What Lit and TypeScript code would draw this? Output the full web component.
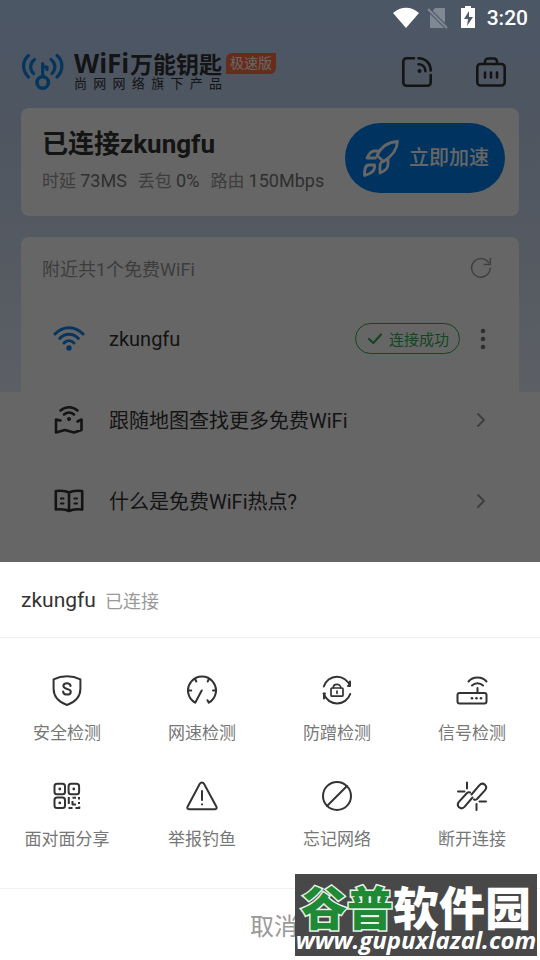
import { LitElement, html, css, svg, SVGTemplateResult } from "lit";
import { customElement, property } from "lit/decorators.js";

type Glyph = { box: string; art: SVGTemplateResult };

const glyphs: Record<string, Glyph> = {
  logo: {
    box: "0 0 44 40",
    art: svg`<g stroke-width="3.2"><path d="M7.500 3.500C1 9 1 19 7.500 25M36 3.500c6.500 5.500 6.500 15.500 0 21.500"/><path d="M13.500 7.500c-5 4-5 9.500-1 14M30 7.500c5 4 5 9.500 1 14"/><circle cx="21.700" cy="30.500" r="5.700" stroke-width="3.600"/><path d="M21.700 24V11.500M21.700 15h4.300v2.500"/></g>`,
  },
  cast: {
    box: "0 0 32 32",
    art: svg`<g stroke-width="2.600"><path d="M13 2.300H5.500a3.200 3.200 0 0 0-3.200 3.200v21a3.200 3.200 0 0 0 3.200 3.200h21a3.200 3.200 0 0 0 3.200-3.200V19"/><path d="M17.500 2.300c7 0 12.200 5.200 12.200 12.200M17.500 8.300c4 0 6.800 2.800 6.800 6.800"/></g><circle cx="18.500" cy="15" r="2" fill="currentColor" stroke="none"/>`,
  },
  toolbox: {
    box: "0 0 32 32",
    art: svg`<g stroke-width="2.600"><rect x="2.300" y="8" width="27.400" height="21.500" rx="3.200"/><path d="M10 7.500V5.500A3 3 0 0 1 13 2.500h6a3 3 0 0 1 3 3v2M10 16.500v5M16 16.500v5M22 16.500v5"/></g>`,
  },
  rocket: {
    box: "0 0 38 38",
    art: svg`<g stroke-width="2.800"><path d="M35.500 2.500C26 3 19 8 15 16.500l6.500 6C29.500 17.500 35 12 35.500 2.500zM17.500 12H12c-3 0-5 3-7 7h8.500M26 19.500v6c0 4-3 6.500-8 8.500v-8.500l2-3"/><path d="M2.500 36.500c0-6 .5-10.500 4.500-10.500h5.500c1 5-2 8.500-10 10.500z"/></g>`,
  },
  refresh: {
    box: "0 0 22 22",
    art: svg`<g stroke-width="1.400"><path d="M20.200 11.500a9.300 9.300 0 1 1-1.700-6M20.300 1.500v6h-6"/></g>`,
  },
  wifi: {
    box: "0 0 32 28",
    art: svg`<g stroke-width="3"><path d="M2 9C10 .5 22 .5 30 9M6.700 13.500c5-5.600 13.600-5.600 18.600 0M11 18c3-3 7-3 10 0"/></g><circle cx="16" cy="23" r="2.700" fill="currentColor" stroke="none"/>`,
  },
  map: {
    box: "0 0 32 32",
    art: svg`<g stroke-width="2.600"><path d="M7.500 6.500c5-4.300 12-4.300 17 0M11 10.500c3-2.500 7-2.500 10 0"/><path d="M7.500 16.500l-4.500-1V28.500l9-2.500 9 2.500 7.500-2.500V15.500l-4 2"/></g><circle cx="16" cy="15" r="2" fill="currentColor" stroke="none"/>`,
  },
  book: {
    box: "0 0 32 28",
    art: svg`<g stroke-width="2.600"><path d="M16 5.500C12.500 3.500 7.500 3.500 2.800 4v18.500c4.700-.5 9.700-.5 13.200 1.500 3.500-2 8.500-2 13.200-1.500V4c-4.700-.5-9.700-.5-13.200 1.500zM16 5.500V24"/></g><path stroke-width="2.200" d="M8 11.500h2.500M8 16.500h2.500M21.500 11.500h2.500M21.500 16.500h2.500"/>`,
  },
  chevron: { box: "0 0 10 16", art: svg`<path stroke-width="1.800" d="M2 2l6 6-6 6"/>` },
  check: { box: "0 0 16 16", art: svg`<path stroke-width="2.200" d="M2 8l4.300 4L14 3.500"/>` },
  more: {
    box: "0 0 6 22",
    art: svg`<g fill="currentColor" stroke="none"><circle cx="3" cy="3" r="2.300"/><circle cx="3" cy="11" r="2.300"/><circle cx="3" cy="19" r="2.300"/></g>`,
  },
  shield: {
    box: "0 0 32 32",
    art: svg`<path d="M16 2.300c-5 0-9 .9-13.400 3.100v9.300C2.600 22.500 8 28 16 31c8-3 13.400-8.500 13.400-16.300V5.400C25 3.200 21 2.300 16 2.300z"/><path d="M19.600 12c-.3-1.800-1.800-2.700-3.600-2.700-2.100 0-3.600 1-3.600 2.700 0 3.900 7.400 2 7.400 5.700 0 1.800-1.600 2.900-3.800 2.900s-3.700-1.100-3.900-3"/>`,
  },
  gauge: {
    box: "0 0 32 32",
    art: svg`<path d="M15.700 16.500L9.200 28.700A14 14 0 1 1 22.800 28.700l-1.300-2.500M2 16.500h3.200M27 16.500h3.200M9 4.800l1.300 2.700M23 4.800l-1.300 2.700"/>`,
  },
  guard: {
    box: "0 0 32 32",
    art: svg`<path d="M2.800 12.500A13.800 13.800 0 0 1 29 12v-4.500M29 12h-2M29.200 20A13.800 13.800 0 0 1 3 20v4.500M2.500 19.500h1.500"/><g stroke-width="1.700"><rect x="10" y="14" width="12" height="8.200" rx="1"/><path d="M12.200 14c0-4.800 7.600-4.800 7.600 0M16 17v2.300"/></g>`,
  },
  router: {
    box: "0 0 32 32",
    art: svg`<rect x="1.500" y="19" width="29" height="10.500" rx="2"/><path d="M21.500 19v-5M12.500 7.500c4.500-5.500 13.500-5.500 18 0M16 11.500c3-3 8-3 11 0"/><g fill="currentColor" stroke="none"><circle cx="16" cy="24.300" r="1.300"/><circle cx="20.500" cy="24.300" r="1.300"/><circle cx="25" cy="24.300" r="1.300"/></g>`,
  },
  qr: {
    box: "0 0 32 32",
    art: svg`<rect x="3.500" y="3.800" width="10.500" height="10.500" rx="2.500"/><rect x="17.600" y="3.800" width="10.500" height="10.500" rx="2.500"/><rect x="3.500" y="17.600" width="10.500" height="10.500" rx="2.500"/><g fill="currentColor" stroke="none"><circle cx="8.800" cy="9" r="1.400"/><circle cx="22.800" cy="9" r="1.400"/><circle cx="8.800" cy="22.900" r="1.400"/></g><path stroke-linecap="butt" d="M17.800 17v7M17.500 28h4M21.500 17.800h3.500M28 17v2.500M21.500 21v3.500h3.500M28 22v2M24.500 28h4.500M28.300 26.500v2"/>`,
  },
  warning: {
    box: "0 0 32 32",
    art: svg`<path d="M13.800 3.800c1-1.800 3.200-1.800 4.200 0l12.300 22.700c.8 1.500 0 2.800-1.600 2.800H3.300c-1.600 0-2.400-1.300-1.600-2.800zM16 11v9M16 24.300v.2"/>`,
  },
  ban: { box: "0 0 32 32", art: svg`<circle cx="16" cy="16" r="14"/><path d="M6 26L26 6"/>` },
  unlink: {
    box: "0 0 32 32",
    art: svg`<path d="M15.500 14.500l7.800-9.200c1.700-1.900 4-2 5.600-.6 1.600 1.500 1.600 3.800 0 5.600L21 19c-1 1-2 1-3 .5M16.500 17.500l-7.800 9.200c-1.700 1.900-4 2-5.600.6-1.600-1.500-1.600-3.800 0-5.600L11 13c1-1 2-1 3-.5M11 2.500v6M2 11.500h6.500M20.500 30v-6M30 21.500h-6.500"/>`,
  },
};

@customElement("ui-icon")
export class UiIcon extends LitElement {
  @property() name = "";

  static styles = css`
    :host {
      display: block;
      flex: none;
    }
    .art {
      display: block;
      width: 100%;
      height: 100%;
      fill: none;
      stroke: currentColor;
      stroke-width: 2;
      stroke-linecap: round;
      stroke-linejoin: round;
    }
  `;

  render() {
    const g = glyphs[this.name];
    return html`<svg class="art" viewBox=${g.box} aria-hidden="true">${g.art}</svg>`;
  }
}

const actions = [
  ["shield", "安全检测"],
  ["gauge", "网速检测"],
  ["guard", "防蹭检测"],
  ["router", "信号检测"],
  ["qr", "面对面分享"],
  ["warning", "举报钓鱼"],
  ["ban", "忘记网络"],
  ["unlink", "断开连接"],
];

@customElement("app-root")
export class AppRoot extends LitElement {
  static styles = css`
    :host {
      display: flex;
      flex-direction: column;
      position: relative;
      min-height: 100vh;
      font-family: Roboto, "Noto Sans CJK SC", sans-serif;
      color: #333;
      background: #fff;
    }
    button {
      font: inherit;
      color: inherit;
      background: none;
      border: 0;
      padding: 0;
    }
    a {
      color: inherit;
      text-decoration: none;
    }
    h1, h2, p {
      margin: 0;
      padding: 0;
      font-weight: 400;
    }
    .behind {
      flex: 1;
      position: relative;
      box-sizing: border-box;
      padding: 0 21px 21px;
      background: linear-gradient(#bedaff, #c4d6f2 108px, #d2e0f4 237px, #e6effc 392px, #fff 392px);
    }
    .scrim {
      position: absolute;
      inset: 0;
      background: rgba(0, 0, 0, 0.6);
    }
    .status {
      position: relative;
      z-index: 1;
      display: flex;
      align-items: center;
      justify-content: flex-end;
      height: 36px;
      margin-right: -9px;
      color: #fff;
    }
    .status-icons {
      width: 84px;
      height: 24px;
      margin-right: 10px;
    }
    .clock {
      font-size: 21px;
      font-weight: 500;
      line-height: 36px;
    }
    .header {
      display: flex;
      align-items: center;
      height: 72px;
    }
    .logo {
      width: 44px;
      height: 40px;
      color: #0a84e8;
      margin-right: 9px;
    }
    .brand {
      width: 148px;
    }
    .brand-name {
      display: flex;
      align-items: center;
      justify-content: space-between;
      font: 700 23px/24px "Noto Sans CJK SC", sans-serif;
      white-space: nowrap;
    }
    .brand-latin {
      font: 700 26px/24px "Open Sans", sans-serif;
    }
    .brand-sub {
      font-size: 13px;
      line-height: 18px;
      text-align: justify;
      text-align-last: justify;
    }
    .edition {
      align-self: flex-start;
      margin: 17px 0 0 4px;
      padding: 0 4px;
      border-radius: 6px 0 6px 0;
      background: #ff6e46;
      color: #fff;
      font-size: 14px;
      line-height: 21px;
    }
    .tools {
      display: flex;
      gap: 42px;
      margin: 0 12px 0 auto;
    }
    .tool {
      width: 32px;
      height: 32px;
    }
    .card {
      background: #fff;
      border-radius: 8px;
    }
    .connected {
      display: flex;
      justify-content: space-between;
      height: 108px;
      box-sizing: border-box;
      padding: 15px 14px 0 21px;
      margin-bottom: 21px;
    }
    .title {
      font-size: 26px;
      font-weight: 700;
      line-height: 42px;
    }
    .metrics {
      display: flex;
      gap: 11px;
      padding-top: 2px;
      font-size: 17px;
      line-height: 28px;
      color: #777;
      white-space: nowrap;
    }
    .value {
      font-size: 18px;
    }
    .label {
      color: #999;
    }
    .boost {
      display: flex;
      align-items: center;
      gap: 9px;
      height: 70px;
      padding: 0 16px 0 17px;
      border-radius: 35px;
      background: #0080f0;
      color: #fff;
      font-size: 20px;
      font-weight: 500;
      line-height: 24px;
      white-space: nowrap;
    }
    .rocket {
      width: 38px;
      height: 38px;
    }
    .nearby-head {
      display: flex;
      align-items: center;
      justify-content: space-between;
      height: 61px;
      padding: 0 27px 0 21px;
      color: #999;
    }
    .nearby-title {
      font-size: 18px;
    }
    .refresh {
      width: 22px;
      height: 22px;
    }
    .row {
      display: flex;
      align-items: center;
      height: 81px;
      padding: 0 33px 0 32px;
      font-size: 20px;
    }
    .row-icon {
      width: 32px;
      height: 32px;
      margin-right: 24px;
    }
    .accent {
      color: #1684e8;
    }
    .row-text {
      flex: 1;
    }
    .chevron {
      width: 10px;
      height: 16px;
      color: #999;
    }
    .ok {
      display: flex;
      align-items: center;
      gap: 6px;
      height: 31px;
      box-sizing: border-box;
      padding: 0 10px 0 11px;
      border: 1px solid #2fae55;
      border-radius: 16px;
      color: #2fae55;
      font-size: 15px;
    }
    .check {
      width: 16px;
      height: 16px;
    }
    .more {
      width: 6px;
      height: 22px;
      margin-left: 20px;
      color: #777;
    }
    .sheet {
      background: #fff;
    }
    .sheet-head {
      display: flex;
      align-items: center;
      gap: 9px;
      height: 75px;
      padding: 0 21px;
    }
    .sheet-name {
      font-size: 21px;
    }
    .sheet-state {
      font-size: 18px;
      color: #999;
    }
    .actions {
      display: grid;
      grid-template-columns: repeat(4, 1fr);
      row-gap: 35px;
      padding: 36px 0 37px;
      border: solid #f0f0f0;
      border-width: 1px 0;
    }
    .action {
      display: flex;
      flex-direction: column;
      align-items: center;
      gap: 15px;
      padding-right: 1px;
      font-size: 17px;
      line-height: 24px;
    }
    .action-icon {
      width: 32px;
      height: 32px;
    }
    .action-label {
      color: #777;
    }
    .cancel {
      display: block;
      width: 100%;
      height: 71px;
      padding-left: 8px;
      font-size: 24px;
      color: #999;
    }
    .mark {
      position: absolute;
      right: 3px;
      bottom: 4px;
      width: 242px;
      height: 82px;
      background: #484848;
      color: #fff;
      text-align: center;
      white-space: nowrap;
    }
    .mark-name {
      font: 900 46px/54px "Noto Sans CJK SC", sans-serif;
      padding-top: 4px;
      height: 50px;
    }
    .mark-green {
      color: #1f8a35;
      -webkit-text-stroke: 3px #e8f3e8;
      paint-order: stroke fill;
    }
    .mark-url {
      font: italic 700 24px/24px "Open Sans", sans-serif;
    }
  `;

  render() {
    return html`
      <main class="behind">
        <div class="status">
          <svg class="status-icons" viewBox="0 0 84 24" aria-hidden="true">
            <path fill="#fff" d="M0 7C8 0 18 0 26 7L13 22z" />
            <path fill="#7f8893" d="M42 2h10v20H37V8z" />
            <path stroke="#4e5a69" stroke-width="4" d="M36 4l18 18" />
            <path stroke="#7f8893" stroke-width="2" d="M35 3l19 19" />
            <path fill="#fff" d="M72 0h6v2h4v20H68V2h4z" />
            <path fill="#4e5a69" d="M76 5l-5 8h4l-1 7 6-9h-4z" />
          </svg>
          <time class="clock">3:20</time>
        </div>
        <header class="header">
          <ui-icon class="logo" name="logo"></ui-icon>
          <div class="brand">
            <h1 class="brand-name"><span class="brand-latin">WiFi</span>万能钥匙</h1>
            <p class="brand-sub">尚网网络旗下产品</p>
          </div>
          <span class="edition">极速版</span>
          <div class="tools">
            <button aria-label="分享"><ui-icon class="tool" name="cast"></ui-icon></button>
            <button aria-label="工具箱"><ui-icon class="tool" name="toolbox"></ui-icon></button>
          </div>
        </header>
        <section class="card connected">
          <div>
            <h2 class="title">已连接zkungfu</h2>
            <p class="metrics">
              <span><span class="label">时延</span> <span class="value">73MS</span></span>
              <span><span class="label">丢包</span> <span class="value">0%</span></span>
              <span><span class="label">路由</span> <span class="value">150Mbps</span></span>
            </p>
          </div>
          <button class="boost"><ui-icon class="rocket" name="rocket"></ui-icon>立即加速</button>
        </section>
        <section class="card">
          <div class="nearby-head">
            <h2 class="nearby-title">附近共1个免费WiFi</h2>
            <button aria-label="刷新"><ui-icon class="refresh" name="refresh"></ui-icon></button>
          </div>
          <div class="row">
            <ui-icon class="row-icon accent" name="wifi"></ui-icon>
            <span class="row-text">zkungfu</span>
            <span class="ok"><ui-icon class="check" name="check"></ui-icon>连接成功</span>
            <button aria-label="更多"><ui-icon class="more" name="more"></ui-icon></button>
          </div>
          <a class="row" href="#map">
            <ui-icon class="row-icon" name="map"></ui-icon>
            <span class="row-text">跟随地图查找更多免费WiFi</span>
            <ui-icon class="chevron" name="chevron"></ui-icon>
          </a>
          <a class="row" href="#help">
            <ui-icon class="row-icon" name="book"></ui-icon>
            <span class="row-text">什么是免费WiFi热点?</span>
            <ui-icon class="chevron" name="chevron"></ui-icon>
          </a>
        </section>
        <div class="scrim"></div>
      </main>
      <section class="sheet" role="dialog" aria-label="zkungfu">
        <div class="sheet-head">
          <span class="sheet-name">zkungfu</span>
          <span class="sheet-state">已连接</span>
        </div>
        <div class="actions">
          ${actions.map(
            ([icon, label]) => html`<button class="action">
              <ui-icon class="action-icon" name=${icon}></ui-icon>
              <span class="action-label">${label}</span>
            </button>`
          )}
        </div>
        <button class="cancel">取消</button>
      </section>
      <aside class="mark">
        <p class="mark-name"><span class="mark-green">谷普</span>软件园</p>
        <p class="mark-url">www.gupuxlazal.com</p>
      </aside>
    `;
  }
}
